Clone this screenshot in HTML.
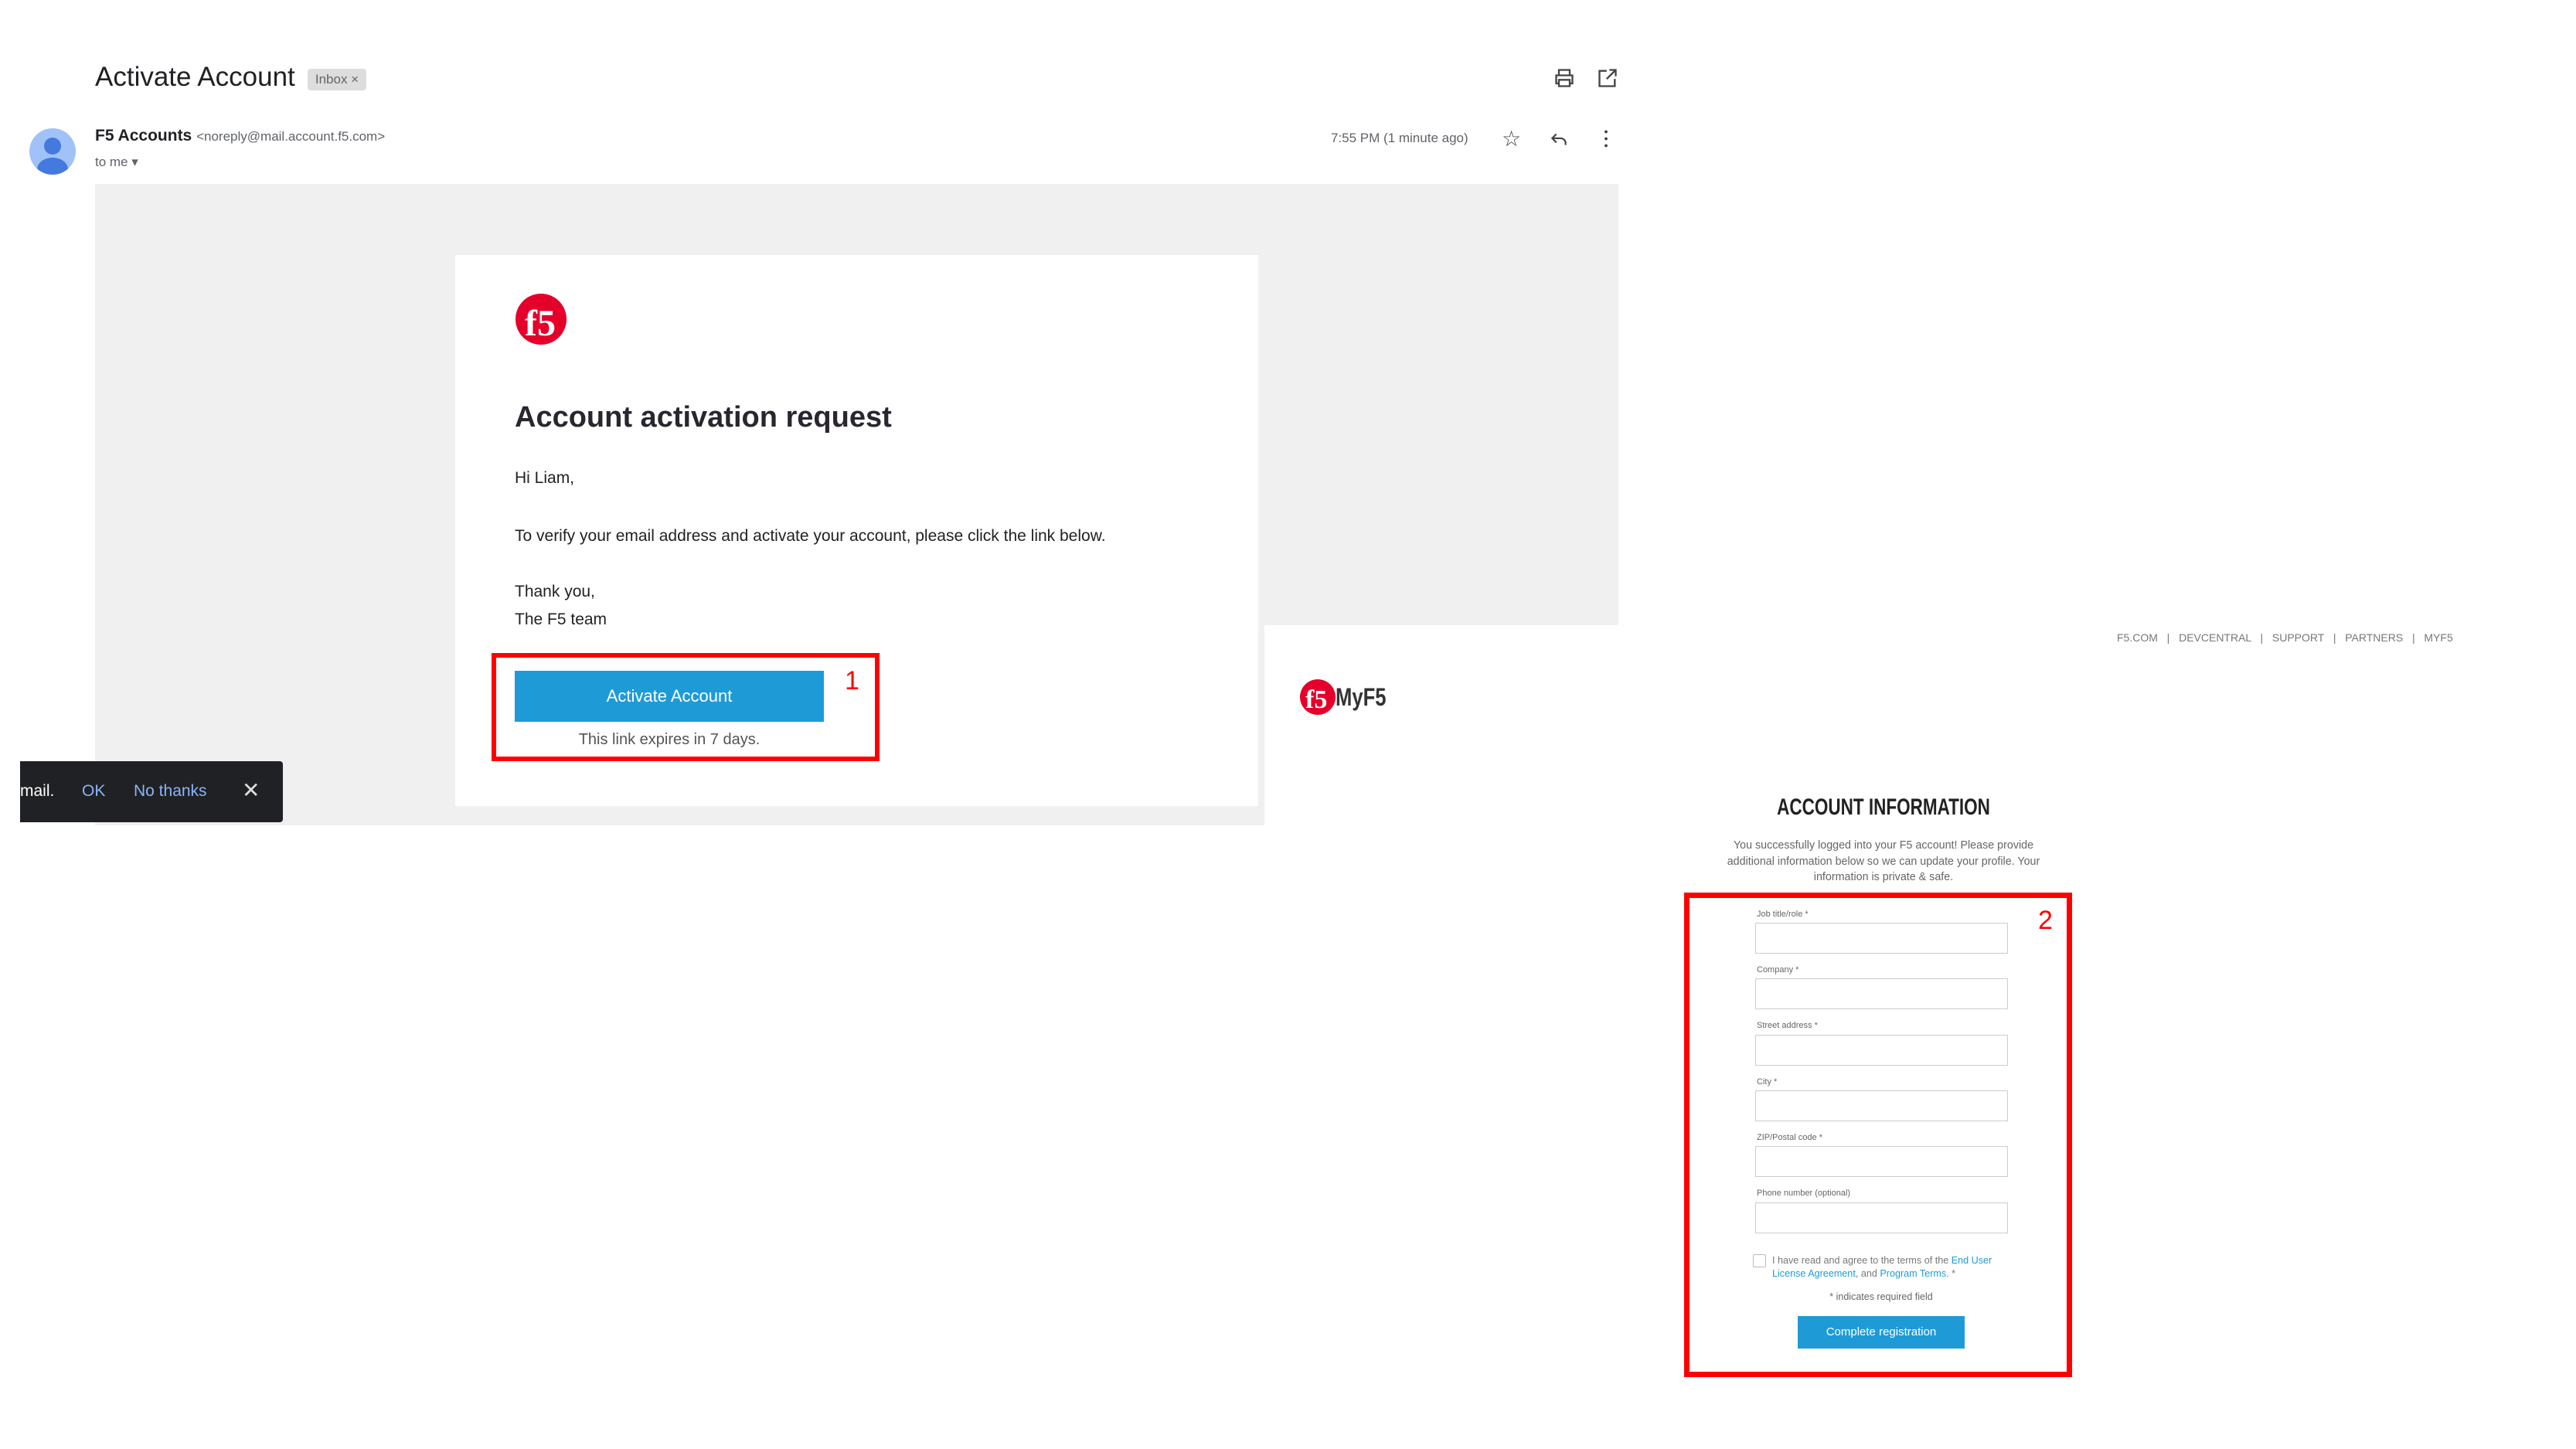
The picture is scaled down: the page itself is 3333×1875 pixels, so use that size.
<!DOCTYPE html>
<html><head><meta charset="utf-8"><style>
body{margin:0;width:3333px;height:1875px;background:#fff;position:relative;overflow:hidden;font-family:"Liberation Sans",Arial,sans-serif}
.a{position:absolute;white-space:nowrap}
.lbl{position:absolute;left:2273px;font-size:11px;color:#666}
.inp{position:absolute;left:2271px;width:327px;height:40px;border:1px solid #ccc;box-sizing:border-box;background:#fff}
</style></head><body>
<div class="a" style="left:123px;top:80px;font-size:35px;color:#202124">Activate Account</div>
<div class="a" style="left:398px;top:89px;width:76px;height:28px;background:#ddd;border-radius:4px;font-size:17px;color:#666;line-height:28px;text-align:center">Inbox ×</div>
<svg class="a" style="left:2010px;top:87px" width="28" height="28" viewBox="0 0 24 24" fill="none" stroke="#444" stroke-width="2"><path d="M6 9V3h12v6M6 18H3v-9h18v9h-3M6 14h12v7H6z"/></svg>
<svg class="a" style="left:2066px;top:87px" width="28" height="28" viewBox="0 0 24 24" fill="none" stroke="#444" stroke-width="2"><path d="M20 13v8H3V4h8M14 3h7v7M21 3l-10 10"/></svg>
<div class="a" style="left:38px;top:166px;width:60px;height:60px;border-radius:50%;background:#a0c2f9;overflow:hidden"><div style="position:absolute;left:19px;top:12px;width:22px;height:22px;border-radius:50%;background:#4479e0"></div><div style="position:absolute;left:10px;top:38px;width:40px;height:30px;border-radius:50%;background:#4479e0"></div></div>
<div class="a" style="left:123px;top:164px;font-size:21px;color:#202124"><b>F5 Accounts</b> <span style="font-size:17px;color:#5f6368">&lt;noreply@mail.account.f5.com&gt;</span></div>
<div class="a" style="left:123px;top:200px;font-size:17px;color:#5f6368">to me ▾</div>
<div class="a" style="left:1722px;top:169px;font-size:17px;color:#5f6368">7:55 PM (1 minute ago)</div>
<div class="a" style="left:1943px;top:163px;font-size:28px;color:#444">☆</div>
<svg class="a" style="left:2004px;top:167px" width="26" height="26" viewBox="0 0 24 24" fill="none" stroke="#444" stroke-width="2"><path d="M9 6L4 11l5 5M4 11h10a6 6 0 0 1 6 6v2"/></svg>
<div class="a" style="left:2076px;top:166px;width:4px;height:26px;background:radial-gradient(circle,#444 1.8px,transparent 2px) 0 0/4px 9px"></div>
<div class="a" style="left:123px;top:238px;width:1971px;height:571px;background:#f0f0f0"></div>
<div class="a" style="left:123px;top:809px;width:1513px;height:259px;background:#f0f0f0"></div>
<div class="a" style="left:589px;top:330px;width:1039px;height:713px;background:#fff"></div>
<svg class="a" style="left:666px;top:379px" width="72" height="72" viewBox="0 0 72 72"><circle cx="34" cy="34" r="33" fill="#e4002b"/><text x="13" y="55" font-family="Liberation Serif" font-size="48" font-weight="bold" fill="#fff">f5</text></svg>
<div class="a" style="left:666px;top:519px;font-size:38px;font-weight:bold;color:#2a2630">Account activation request</div>
<div class="a" style="left:666px;top:607px;font-size:21px;color:#222">Hi Liam,</div>
<div class="a" style="left:666px;top:682px;font-size:21px;color:#222">To verify your email address and activate your account, please click the link below.</div>
<div class="a" style="left:666px;top:754px;font-size:21px;color:#222">Thank you,</div>
<div class="a" style="left:666px;top:790px;font-size:21px;color:#222">The F5 team</div>
<div class="a" style="left:636px;top:845px;width:502px;height:140px;border:6px solid #f00;box-sizing:border-box"></div>
<div class="a" style="left:666px;top:868px;width:400px;height:66px;background:#1e9bd7;color:#fff;font-size:22px;line-height:66px;text-align:center">Activate Account</div>
<div class="a" style="left:666px;top:946px;width:400px;text-align:center;font-size:20px;color:#555">This link expires in 7 days.</div>
<div class="a" style="left:1093px;top:862px;font-size:34px;color:#f00">1</div>
<div class="a" style="left:26px;top:985px;width:340px;height:79px;background:#202124;border-radius:0 4px 4px 0"></div>
<div class="a" style="left:26px;top:1012px;font-size:21px;color:#fff">mail.</div>
<div class="a" style="left:106px;top:1012px;font-size:21px;color:#8ab4f8">OK</div>
<div class="a" style="left:173px;top:1012px;font-size:21px;color:#8ab4f8">No thanks</div>
<div class="a" style="left:313px;top:1006px;font-size:28px;color:#ddd">✕</div>
<svg class="a" style="left:1681px;top:877px" width="50" height="50" viewBox="0 0 50 50"><circle cx="24" cy="25" r="23" fill="#e4002b"/><text x="8" y="39" font-family="Liberation Serif" font-size="34" font-weight="bold" fill="#fff">f5</text></svg>
<div class="a" style="left:1728px;top:884px;font-size:32px;font-weight:bold;color:#333;transform:scaleX(.8);transform-origin:left">MyF5</div>
<div class="a" style="left:2739px;top:817px;font-size:14px;color:#777;word-spacing:2px">F5.COM &nbsp;|&nbsp; DEVCENTRAL &nbsp;|&nbsp; SUPPORT &nbsp;|&nbsp; PARTNERS &nbsp;|&nbsp; MYF5</div>
<div class="a" style="left:2237px;width:400px;text-align:center;top:1028px;font-size:30px;font-weight:bold;color:#222;transform:scaleX(.75)">ACCOUNT INFORMATION</div>
<div class="a" style="left:2187px;width:500px;text-align:center;top:1084px;font-size:14.3px;line-height:20.5px;color:#666;white-space:normal">You successfully logged into your F5 account! Please provide<br>additional information below so we can update your profile. Your<br>information is private &amp; safe.</div>
<div class="a" style="left:2179px;top:1155px;width:502px;height:627px;border:7px solid #f00;box-sizing:border-box"></div>
<div class="a" style="left:2637px;top:1172px;font-size:34px;color:#f00">2</div>
<div class="lbl" style="top:1177px">Job title/role *</div><div class="inp" style="top:1194px"></div>
<div class="lbl" style="top:1249px">Company *</div><div class="inp" style="top:1266px"></div>
<div class="lbl" style="top:1321px">Street address *</div><div class="inp" style="top:1339px"></div>
<div class="lbl" style="top:1394px">City *</div><div class="inp" style="top:1411px"></div>
<div class="lbl" style="top:1466px">ZIP/Postal code *</div><div class="inp" style="top:1483px"></div>
<div class="lbl" style="top:1538px">Phone number (optional)</div><div class="inp" style="top:1556px"></div>
<div class="a" style="left:2268px;top:1623px;width:17px;height:17px;border:1px solid #bbb;border-radius:2px;box-sizing:border-box"></div>
<div class="a" style="left:2293px;top:1623px;font-size:12.6px;line-height:17px;color:#777">I have read and agree to the terms of the <span style="color:#1e9bd7">End User</span><br><span style="color:#1e9bd7">License Agreement</span>, and <span style="color:#1e9bd7">Program Terms</span>. *</div>
<div class="a" style="left:2334px;width:200px;text-align:center;top:1671px;font-size:12.5px;color:#666">* indicates required field</div>
<div class="a" style="left:2326px;top:1703px;width:216px;height:42px;background:#1e9bd7;color:#fff;font-size:15px;line-height:42px;text-align:center">Complete registration</div>
</body></html>
